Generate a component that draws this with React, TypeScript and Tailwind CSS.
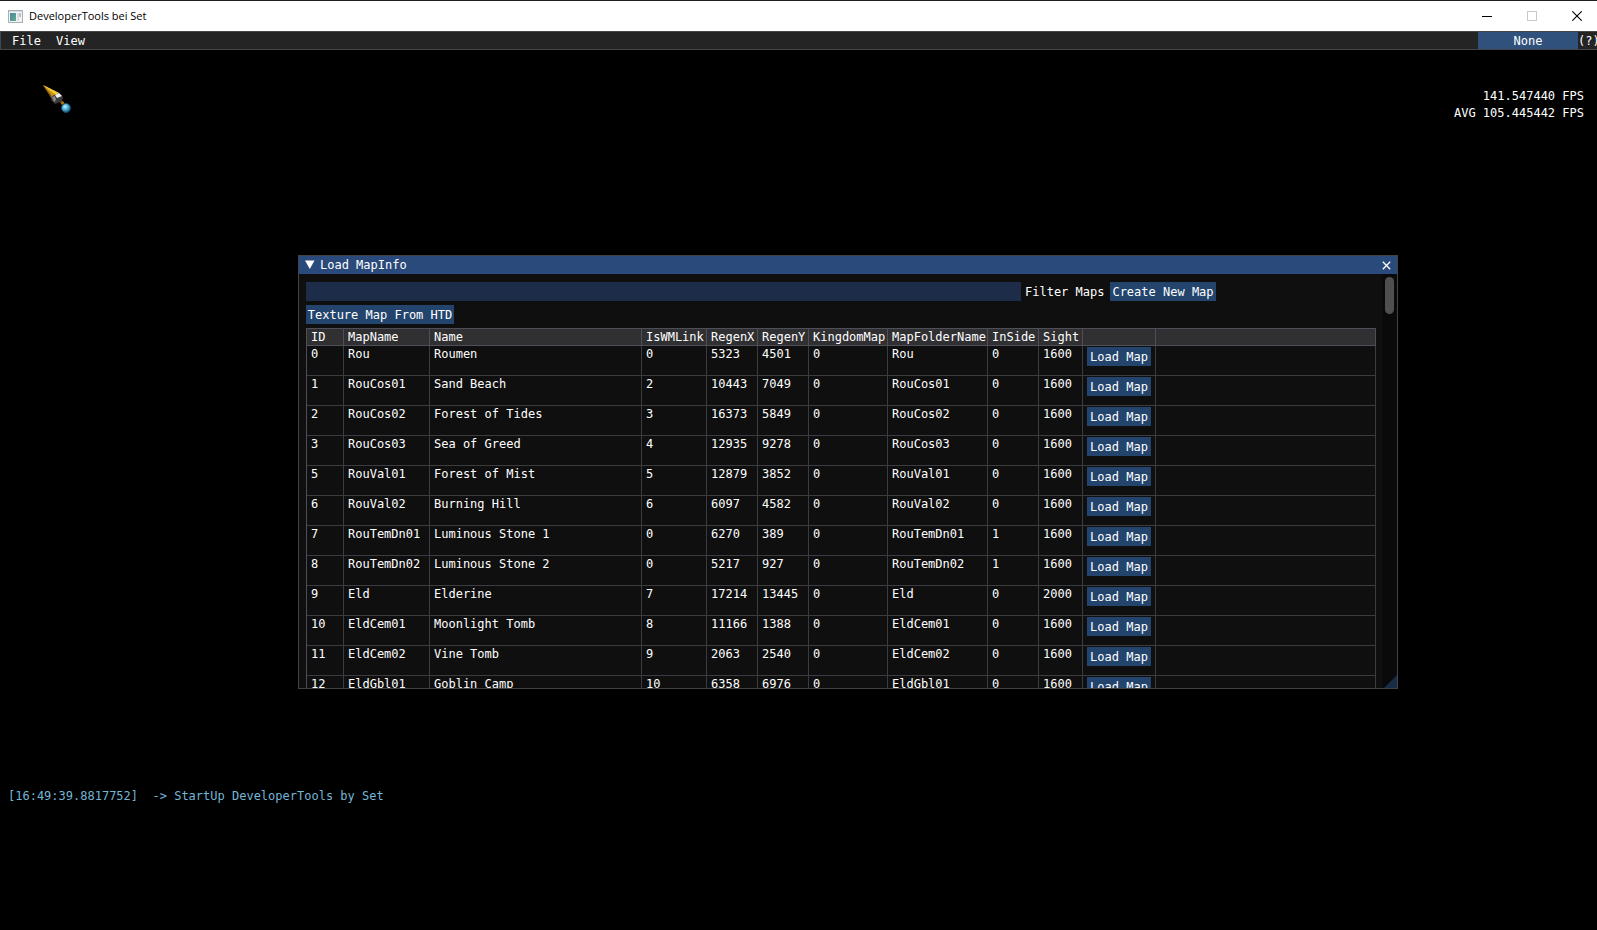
const columns = [
  { label: "ID", width: "w-[37px]" },
  { label: "MapName", width: "w-[86px]" },
  { label: "Name", width: "w-[212px]" },
  { label: "IsWMLink", width: "w-[65px]" },
  { label: "RegenX", width: "w-[51px]" },
  { label: "RegenY", width: "w-[51px]" },
  { label: "KingdomMap", width: "w-[79px]" },
  { label: "MapFolderName", width: "w-[100px]" },
  { label: "InSide", width: "w-[51px]" },
  { label: "Sight", width: "w-[44px]" },
  { label: "", width: "w-[73px]" },
  { label: "", width: "" },
];

const maps: string[][] = [
  ["0", "Rou", "Roumen", "0", "5323", "4501", "0", "Rou", "0", "1600"],
  ["1", "RouCos01", "Sand Beach", "2", "10443", "7049", "0", "RouCos01", "0", "1600"],
  ["2", "RouCos02", "Forest of Tides", "3", "16373", "5849", "0", "RouCos02", "0", "1600"],
  ["3", "RouCos03", "Sea of Greed", "4", "12935", "9278", "0", "RouCos03", "0", "1600"],
  ["5", "RouVal01", "Forest of Mist", "5", "12879", "3852", "0", "RouVal01", "0", "1600"],
  ["6", "RouVal02", "Burning Hill", "6", "6097", "4582", "0", "RouVal02", "0", "1600"],
  ["7", "RouTemDn01", "Luminous Stone 1", "0", "6270", "389", "0", "RouTemDn01", "1", "1600"],
  ["8", "RouTemDn02", "Luminous Stone 2", "0", "5217", "927", "0", "RouTemDn02", "1", "1600"],
  ["9", "Eld", "Elderine", "7", "17214", "13445", "0", "Eld", "0", "2000"],
  ["10", "EldCem01", "Moonlight Tomb", "8", "11166", "1388", "0", "EldCem01", "0", "1600"],
  ["11", "EldCem02", "Vine Tomb", "9", "2063", "2540", "0", "EldCem02", "0", "1600"],
  ["12", "EldGbl01", "Goblin Camp", "10", "6358", "6976", "0", "EldGbl01", "0", "1600"],
];

function TitleBar() {
  return (
    <header className="flex h-[31px] shrink-0 items-center border-t border-[#202020] bg-white text-black">
      <svg className="ml-2 h-[13px] w-[15px]" viewBox="0 0 15 13" aria-hidden="true">
        <defs>
          <linearGradient id="app" x1="0" y1="0" x2="1" y2="1">
            <stop offset="0" stopColor="#4b83a8" />
            <stop offset="1" stopColor="#5fae83" />
          </linearGradient>
        </defs>
        <rect x="0.5" y="0.5" width="14" height="12" fill="#f1f3f4" stroke="#a9b0b5" />
        <rect x="1" y="1" width="13" height="1" fill="#d4dade" />
        <rect x="2" y="3" width="6" height="8" fill="url(#app)" />
        <rect x="9" y="3" width="2" height="8" fill="#d9dde0" />
        <rect x="11" y="3" width="2" height="4" fill="#b8c4cc" />
      </svg>
      <h1 className="ml-[6px] grow font-['Open_Sans','Noto_Sans',sans-serif] text-[11px] leading-4">
        DeveloperTools bei Set
      </h1>
      <div className="flex h-full items-center gap-[35px] pr-[15px]">
        <button aria-label="Minimize">
          <svg className="h-[10px] w-[10px]" viewBox="0 0 10 10">
            <path d="M0 5.5H10" stroke="#000" />
          </svg>
        </button>
        <button aria-label="Maximize" disabled>
          <svg className="h-[10px] w-[10px]" viewBox="0 0 10 10">
            <rect x="0.5" y="0.5" width="9" height="9" fill="none" stroke="#c8c8c8" />
          </svg>
        </button>
        <button aria-label="Close">
          <svg className="h-[10px] w-[10px]" viewBox="0 0 10 10">
            <path d="M0.3 0.3L9.7 9.7M9.7 0.3L0.3 9.7" stroke="#000" strokeWidth="1.1" />
          </svg>
        </button>
      </div>
    </header>
  );
}

function MenuBar() {
  return (
    <nav className="flex h-[19px] shrink-0 items-stretch overflow-hidden border-y border-l border-[#44444b] bg-[#242424]">
      <button className="ml-[11px] w-[28px] text-left">File</button>
      <button className="ml-4 w-[28px] text-left">View</button>
      <button className="ml-auto w-[100px] shrink-0 bg-[#2f517c]">None</button>
      <button className="w-[19px] shrink-0 text-left whitespace-nowrap">(?)</button>
    </nav>
  );
}

function CursorSprite() {
  return (
    <svg className="absolute top-[84px] left-[42px] h-[30px] w-[30px]" viewBox="0 0 30 30" aria-hidden="true">
      <defs>
        <radialGradient id="orb" cx="0.4" cy="0.35" r="0.65">
          <stop offset="0" stopColor="#c4f1ff" />
          <stop offset="0.5" stopColor="#4fb4dc" />
          <stop offset="1" stopColor="#1b5877" />
        </radialGradient>
      </defs>
      <path d="M1 1L17 9L10 15Z" fill="#c8930f" />
      <path d="M1 1L17 9L14 11Z" fill="#f3cc3c" />
      <path d="M1 1L10 15L9 11Z" fill="#6e4c06" />
      <path d="M10 12L17 9L21 13L20 17L13 20L9 16Z" fill="#3b3b3f" />
      <path d="M13 11L17 9L20 12L15 14Z" fill="#f0f0f0" />
      <path d="M10 13L13 12L14 16L12 18Z" fill="#8b8b8f" />
      <path d="M18 18L21 17L23 20L20 21Z" fill="#a8700e" />
      <circle cx="24" cy="24" r="4.5" fill="url(#orb)" stroke="#174a62" />
    </svg>
  );
}

function MapInfoWindow() {
  return (
    <section
      aria-label="Load MapInfo"
      className="absolute top-[255px] right-[199px] left-[298px] flex h-[434px] flex-col overflow-hidden border border-[#424249] bg-[#0f0f0f]"
    >
      <div className="flex h-[18px] shrink-0 items-center bg-[#294a7a] px-[6px]">
        <button aria-label="Collapse">
          <svg className="h-[10px] w-[10px]" viewBox="0 0 10 10">
            <path d="M0 0.5H9.5L4.8 9Z" fill="#fff" />
          </svg>
        </button>
        <h2 className="ml-[5px] grow">Load MapInfo</h2>
        <button aria-label="Close window">
          <svg className="h-[9px] w-[9px]" viewBox="0 0 9 9">
            <path d="M0.8 0.8L8.2 8.2M8.2 0.8L0.8 8.2" stroke="#fff" strokeWidth="1.3" />
          </svg>
        </button>
      </div>

      <div className="flex min-h-0 grow">
        <div className="flex min-w-0 grow flex-col gap-1 overflow-hidden pt-2 pr-[6px] pl-[7px]">
          <div className="flex h-[19px] shrink-0 items-stretch">
            <input id="filter" type="text" className="w-[715px] bg-[#1d2d49] px-1 text-white outline-none" />
            <label htmlFor="filter" className="ml-1 w-[77px] leading-5 whitespace-nowrap">
              Filter Maps
            </label>
            <button className="ml-2 w-[106px] bg-[#23456d] whitespace-nowrap">Create New Map</button>
          </div>
          <button className="h-[19px] w-[148px] shrink-0 bg-[#23456d] whitespace-nowrap">
            Texture Map From HTD
          </button>
          <table className="w-full table-fixed border-separate border-spacing-0 border-t border-l border-[#4f4f59]">
            <thead>
              <tr className="h-[17px] bg-[#303033]">
                {columns.map((column, i) => (
                  <th
                    key={i}
                    className={`${column.width} border-r border-b border-[#4f4f59] p-0 pl-1 text-left leading-4 font-normal whitespace-nowrap`}
                  >
                    {column.label}
                  </th>
                ))}
              </tr>
            </thead>
            <tbody>
              {maps.map((row) => (
                <tr key={row[0]} className="h-[30px]">
                  {row.map((value, i) => (
                    <td
                      key={i}
                      className="border-r border-b border-[#3b3b40] p-0 pl-1 align-top leading-4 whitespace-nowrap"
                    >
                      {value}
                    </td>
                  ))}
                  <td className="border-r border-b border-[#3b3b40] p-0 pt-px pl-1 align-top">
                    <button className="block h-[19px] w-[64px] bg-[#23456d] whitespace-nowrap">Load Map</button>
                  </td>
                  <td className="border-r border-b border-[#3b3b40] p-0" />
                </tr>
              ))}
            </tbody>
          </table>
        </div>
        <div className="w-[15px] shrink-0 bg-[#0a0a0a] pt-[3px] pl-[3px]">
          <div className="h-[37px] w-[9px] rounded-full bg-[#4f4f4f]" />
        </div>
      </div>
      <svg className="absolute right-0 bottom-0 h-[13px] w-[13px]" viewBox="0 0 13 13" aria-hidden="true">
        <path d="M13 0V13H0Z" fill="#182c46" />
      </svg>
    </section>
  );
}

export default function App() {
  return (
    <div className="relative flex min-h-screen flex-col overflow-hidden bg-black font-['DejaVu_Sans_Mono','Liberation_Mono',monospace] text-[12px] leading-4 text-white">
      <TitleBar />
      <MenuBar />
      <main className="flex grow flex-col justify-between">
        <div className="mt-[38px] mr-[13px] text-right leading-[17px]">
          <p>141.547440 FPS</p>
          <p>AVG 105.445442 FPS</p>
        </div>
        <p className="mb-[126px] ml-2 whitespace-pre text-[#75b5d6]">
          {"[16:49:39.8817752]  -> StartUp DeveloperTools by Set"}
        </p>
      </main>
      <CursorSprite />
      <MapInfoWindow />
    </div>
  );
}
